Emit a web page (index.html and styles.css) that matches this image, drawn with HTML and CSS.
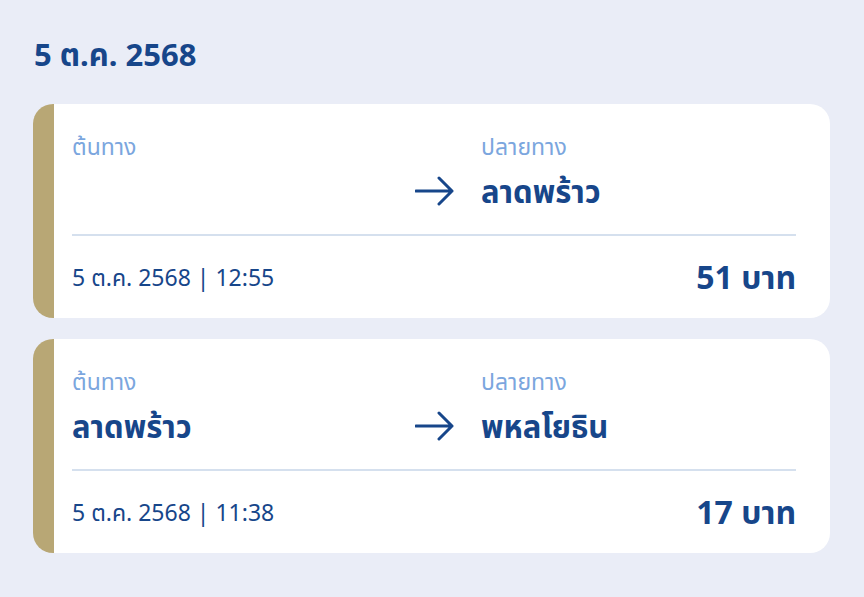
FILE: index.html
```html
<!DOCTYPE html>
<html lang="th">
<head>
<meta charset="utf-8">
<link rel="stylesheet" href="styles.css">
</head>
<body>
<main class="page">
  <h1 class="day-title">5 ต.ค. 2568</h1>
  <section class="trip-card">
    <div class="route">
      <div class="stop">
        <div class="stop-label">ต้นทาง</div>
        <div class="stop-name"></div>
      </div>
      <div class="arrow">
        <svg width="40" height="30" viewBox="0 0 40 30"><path d="M1 15 H37 M24 2 L37 15 L24 28" fill="none" stroke="#17468a" stroke-width="3" stroke-linecap="round" stroke-linejoin="round"/></svg>
      </div>
      <div class="stop">
        <div class="stop-label">ปลายทาง</div>
        <div class="stop-name">ลาดพร้าว</div>
      </div>
    </div>
    <div class="trip-meta">
      <span class="trip-time">5 ต.ค. 2568 | 12:55</span>
      <span class="trip-fare">51 บาท</span>
    </div>
  </section>
  <section class="trip-card">
    <div class="route">
      <div class="stop">
        <div class="stop-label">ต้นทาง</div>
        <div class="stop-name">ลาดพร้าว</div>
      </div>
      <div class="arrow">
        <svg width="40" height="30" viewBox="0 0 40 30"><path d="M1 15 H37 M24 2 L37 15 L24 28" fill="none" stroke="#17468a" stroke-width="3" stroke-linecap="round" stroke-linejoin="round"/></svg>
      </div>
      <div class="stop">
        <div class="stop-label">ปลายทาง</div>
        <div class="stop-name">พหลโยธิน</div>
      </div>
    </div>
    <div class="trip-meta">
      <span class="trip-time">5 ต.ค. 2568 | 11:38</span>
      <span class="trip-fare">17 บาท</span>
    </div>
  </section>
</main>
</body>
</html>
```

FILE: styles.css
```css
* { box-sizing: border-box; }
html, body {
  margin: 0;
  padding: 0;
  background: #eaedf7;
  font-family: "Noto Sans", "Noto Sans Thai", sans-serif;
  color: #17468a;
}
.page {
  width: 864px;
  min-height: 597px;
  padding: 36px 34px 0 33px;
}
.day-title {
  margin: 0 0 32px 1px;
  font-size: 31px;
  line-height: 36px;
  font-weight: 700;
  color: #17468a;
}
.trip-card {
  background: #fff;
  border-left: 21px solid #b8a775;
  border-radius: 20px;
  padding: 28px 34px 21px 18px;
  margin-bottom: 21px;
  width: 797px;
}
.route {
  display: grid;
  grid-template-columns: 343px 66px 1fr;
  padding-bottom: 25px;
  border-bottom: 2px solid #d5e0ee;
}
.stop-label {
  font-size: 23px;
  line-height: 28px;
  color: #7ba6de;
}
.stop-name {
  font-size: 31px;
  line-height: 36px;
  font-weight: 700;
  min-height: 36px;
  margin-top: 13px;
}
.arrow {
  display: flex;
  align-items: flex-end;
  padding-bottom: 3px;
}
.trip-meta {
  display: flex;
  justify-content: space-between;
  align-items: center;
  padding-top: 21px;
  height: 61px;
}
.trip-time {
  font-size: 23px;
  line-height: 28px;
}
.trip-fare {
  font-size: 32px;
  line-height: 40px;
  font-weight: 700;
}
```
